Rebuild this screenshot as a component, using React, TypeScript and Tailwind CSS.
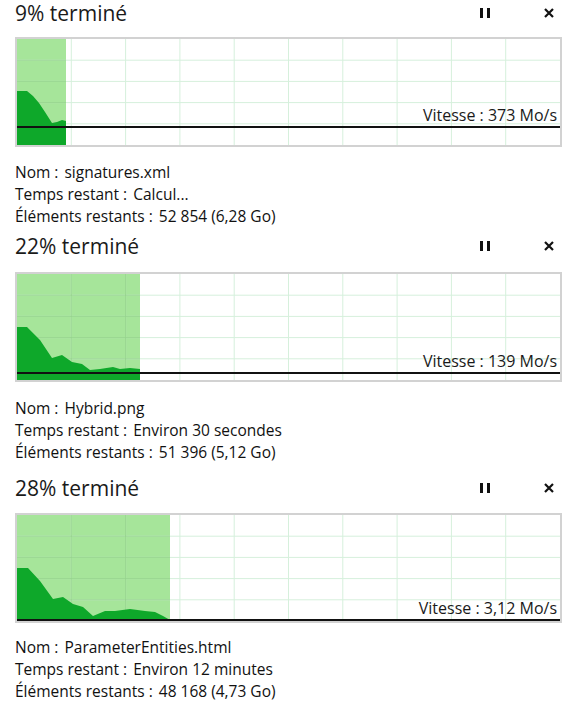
type Pt = [number, number];

type Transfer = {
  percent: number;
  speed: string;
  name: string;
  remaining: string;
  items: string;
  progress: number;
  line: number;
  curve: Pt[];
  titleGap: string;
  graphGap: string;
  infoGap: string;
};

const W = 543;
const H = 106;

const transfers: Transfer[] = [
  {
    percent: 9,
    speed: "373 Mo/s",
    name: "signatures.xml",
    remaining: "Calcul...",
    items: "52 854 (6,28 Go)",
    progress: 49,
    line: 88,
    curve: [
      [0, 52], [10, 52], [16, 57], [22, 64], [28, 73], [35, 84], [40, 83], [45, 81], [49, 82],
    ],
    titleGap: "mt-0",
    graphGap: "mt-[11px]",
    infoGap: "mt-[14px]",
  },
  {
    percent: 22,
    speed: "139 Mo/s",
    name: "Hybrid.png",
    remaining: "Environ 30 secondes",
    items: "51 396 (5,12 Go)",
    progress: 123,
    line: 99,
    curve: [
      [0, 53], [10, 53], [23, 66], [35, 84], [45, 81], [55, 88], [65, 90], [73, 96], [83, 95],
      [96, 93], [103, 95], [113, 94], [123, 95],
    ],
    titleGap: "mt-[6px]",
    graphGap: "mt-[13px]",
    infoGap: "mt-[15px]",
  },
  {
    percent: 28,
    speed: "3,12 Mo/s",
    name: "ParameterEntities.html",
    remaining: "Environ 12 minutes",
    items: "48 168 (4,73 Go)",
    progress: 153,
    line: 105,
    curve: [
      [0, 53], [11, 53], [23, 66], [36, 84], [46, 82], [56, 89], [66, 92], [76, 101], [88, 96],
      [98, 96], [113, 94], [128, 96], [138, 97], [146, 101], [153, 105],
    ],
    titleGap: "mt-[12px]",
    graphGap: "mt-[12px]",
    infoGap: "mt-[13px]",
  },
];

const Graph: React.FC<{ t: Transfer }> = ({ t }) => {
  const cols = Array.from({ length: 9 }, (_, i) => ((i + 1) * W) / 10);
  const rows = Array.from({ length: 4 }, (_, i) => ((i + 1) * H) / 5);
  const area =
    t.curve.map(([x, y], i) => `${i === 0 ? "M" : "L"}${x},${y}`).join(" ") +
    ` L${t.progress},${H} L0,${H} Z`;

  return (
    <div className="relative h-[110px] w-[547px] border-2 border-[#d2d2d2] bg-white">
      <svg width={W} height={H} className="block">
        <rect x={0} y={0} width={t.progress} height={H} fill="#a6e59a" />
        {cols.map((x) => (
          <line key={x} x1={x} y1={0} x2={x} y2={H} stroke="#d6f0dc" strokeWidth={1} />
        ))}
        {rows.map((y) => (
          <line key={y} x1={0} y1={y} x2={W} y2={y} stroke="#d6f0dc" strokeWidth={1} />
        ))}
        {cols
          .filter((x) => x < t.progress)
          .map((x) => (
            <line key={x} x1={x} y1={0} x2={x} y2={H} stroke="#96d68c" strokeWidth={1} />
          ))}
        {rows.map((y) => (
          <line key={y} x1={0} y1={y} x2={t.progress} y2={y} stroke="#96d68c" strokeWidth={1} />
        ))}
        <path d={area} fill="#0ea82a" />
        <line x1={0} y1={t.line} x2={W} y2={t.line} stroke="#111" strokeWidth={2} />
      </svg>
      <div
        className="absolute right-[3px] text-[16px] leading-[20px] text-[#1a1a1a]"
        style={{ top: t.line - 22 }}
      >
        Vitesse : {t.speed}
      </div>
    </div>
  );
};

const Panel: React.FC<{ t: Transfer }> = ({ t }) => (
  <div>
    <div className={`flex h-[26px] items-center justify-between ${t.titleGap}`}>
      <div className="text-[21px] leading-[26px] text-[#1a1a1a]">{t.percent}% terminé</div>
      <div className="flex items-center gap-[54px] pr-[8px]">
        <div className="flex gap-[4px]">
          <span className="block h-[10px] w-[3px] bg-[#111]" />
          <span className="block h-[10px] w-[3px] bg-[#111]" />
        </div>
        <svg width="10" height="10" viewBox="0 0 10 10">
          <path d="M1 1 L9 9 M9 1 L1 9" stroke="#111" strokeWidth="2.2" />
        </svg>
      </div>
    </div>
    <div className={t.graphGap}>
      <Graph t={t} />
    </div>
    <div className={`${t.infoGap} text-[15.5px] leading-[22px] text-[#111]`}>
      <div>
        Nom :<span className="ml-[6px]">{t.name}</span>
      </div>
      <div>
        Temps restant :<span className="ml-[6px]">{t.remaining}</span>
      </div>
      <div>
        Éléments restants :<span className="ml-[6px]">{t.items}</span>
      </div>
    </div>
  </div>
);

export default function App() {
  return (
    <div
      className="h-[718px] w-[578px] overflow-hidden bg-white pl-[15px] pr-[16px]"
      style={{ fontFamily: '"Open Sans", "Noto Sans", sans-serif' }}
    >
      {transfers.map((t) => (
        <Panel key={t.percent} t={t} />
      ))}
    </div>
  );
}
